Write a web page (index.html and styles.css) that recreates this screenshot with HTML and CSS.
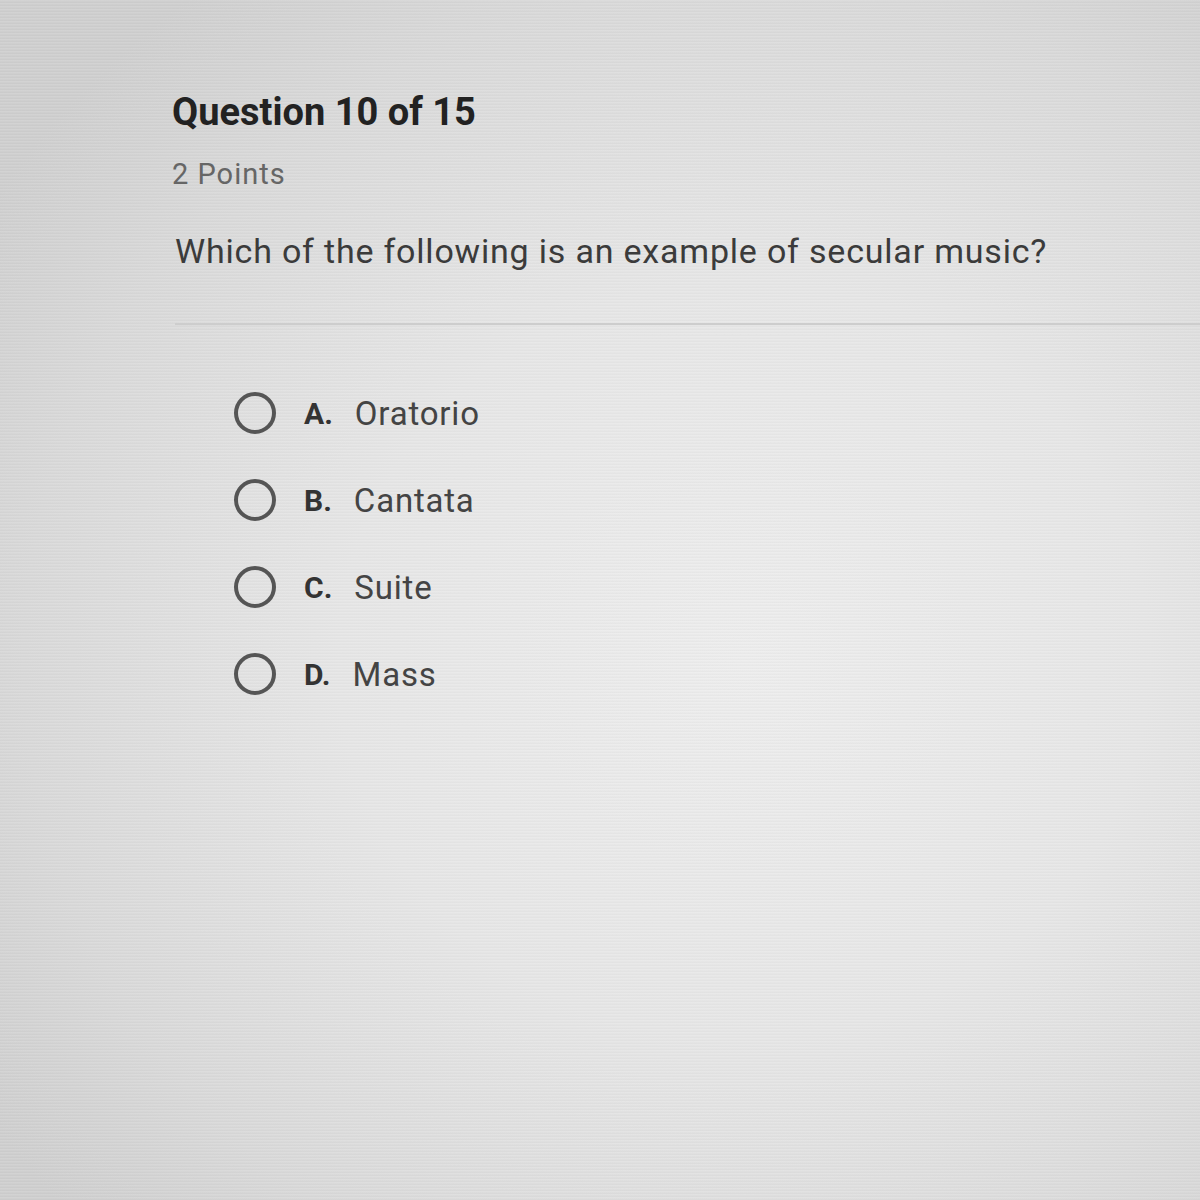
FILE: index.html
```html
<!DOCTYPE html>
<html lang="en">
<head>
<meta charset="utf-8">
<title>Question 10 of 15</title>
<link rel="stylesheet" href="styles.css">
</head>
<body>
<main class="screen">
  <section class="question">
    <h1 class="q-title">Question 10 of 15</h1>
    <div class="q-points">2 Points</div>
    <p class="q-text">Which of the following is an example of secular music?</p>
  </section>
  <hr class="divider">
  <ul class="options">
    <li class="option"><span class="radio"></span><span class="opt-letter">A.</span><span class="opt-text">Oratorio</span></li>
    <li class="option"><span class="radio"></span><span class="opt-letter">B.</span><span class="opt-text">Cantata</span></li>
    <li class="option"><span class="radio"></span><span class="opt-letter">C.</span><span class="opt-text">Suite</span></li>
    <li class="option"><span class="radio"></span><span class="opt-letter">D.</span><span class="opt-text">Mass</span></li>
  </ul>
</main>
</body>
</html>
```

FILE: styles.css
```css
html, body {
  margin: 0;
  padding: 0;
  height: 100%;
}

body {
  font-family: Roboto, "Liberation Sans", Arial, sans-serif;
  background:
    repeating-linear-gradient(180deg, rgba(255,255,255,0.06) 0px, rgba(255,255,255,0.06) 1px, rgba(0,0,0,0.025) 2px, rgba(0,0,0,0.025) 3px),
    radial-gradient(ellipse 75% 70% at 62% 55%, #eeeeee 0%, #e7e7e7 45%, #dadada 80%, #d0d0d0 100%);
  color: #333;
}

.screen {
  min-height: 1200px;
  box-sizing: border-box;
  padding-top: 89px;
  display: flex;
  flex-direction: column;
}

.question {
  padding-left: 172px;
  display: flex;
  flex-direction: column;
}

.q-title {
  margin: 0;
  font-size: 38px;
  line-height: 46px;
  font-weight: 700;
  color: #222;
}

.q-points {
  margin-top: 21px;
  font-size: 29px;
  line-height: 36px;
  color: #666;
  letter-spacing: 1px;
}

.q-text {
  margin: 39px 0 0 3px;
  font-size: 34px;
  line-height: 40px;
  color: #3b3b3b;
  letter-spacing: 0.8px;
}

.divider {
  margin: 52px 0 0 175px;
  border: 0;
  height: 2px;
  background: #cdcdcd;
}

.options {
  list-style: none;
  margin: 66px 0 0 0;
  padding: 0 0 0 234px;
  display: flex;
  flex-direction: column;
  gap: 43px;
}

.option {
  display: flex;
  align-items: center;
  height: 44px;
}

.radio {
  box-sizing: border-box;
  width: 42px;
  height: 42px;
  border: 4px solid #555;
  border-radius: 50%;
  flex: none;
  margin-right: 28px;
}

.opt-letter {
  font-size: 30px;
  font-weight: 700;
  color: #333;
  margin-right: 22px;
}

.opt-text {
  font-size: 33px;
  color: #444;
  letter-spacing: 0.8px;
}
```
